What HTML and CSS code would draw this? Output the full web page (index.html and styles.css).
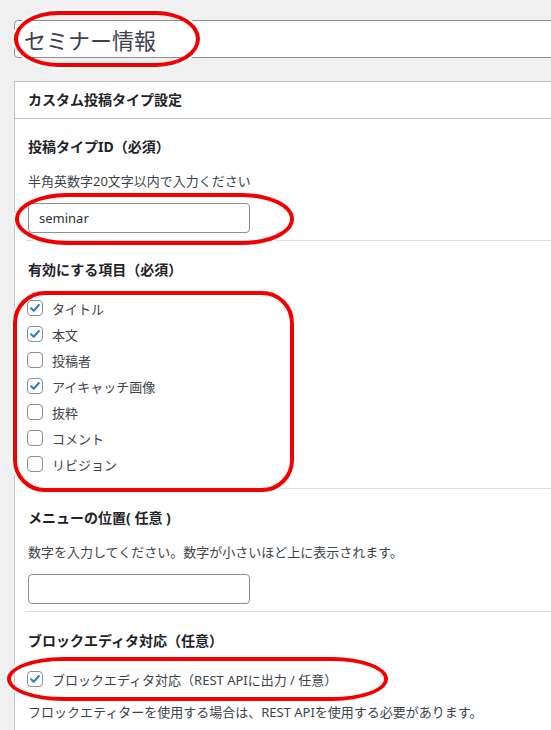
FILE: index.html
```html
<!DOCTYPE html>
<html lang="ja">
<head>
<meta charset="utf-8">
<title>セミナー情報 - カスタム投稿タイプ設定</title>
<link rel="stylesheet" href="styles.css">
</head>
<body>

<div class="wrap">

<div class="titlewrap">
  <input class="title-input" type="text" value="セミナー情報">
</div>

<div class="postbox">
  <h2 class="postbox-title">カスタム投稿タイプ設定</h2>
  <div class="inside">

    <div class="field first">
      <h3>投稿タイプID（必須）</h3>
      <p class="desc">半角英数字20文字以内で入力ください</p>
      <input class="text" type="text" value="seminar">
    </div>

    <div class="field">
      <h3>有効にする項目（必須）</h3>
      <ul class="checks">
        <li><span class="cb on"><svg viewBox="0 0 16 16"><path d="M3.6 8.2 L6.6 11.2 L12.4 4.6"/></svg></span>タイトル</li>
        <li><span class="cb on"><svg viewBox="0 0 16 16"><path d="M3.6 8.2 L6.6 11.2 L12.4 4.6"/></svg></span>本文</li>
        <li><span class="cb"></span>投稿者</li>
        <li><span class="cb on"><svg viewBox="0 0 16 16"><path d="M3.6 8.2 L6.6 11.2 L12.4 4.6"/></svg></span>アイキャッチ画像</li>
        <li><span class="cb"></span>抜粋</li>
        <li><span class="cb"></span>コメント</li>
        <li><span class="cb"></span>リビジョン</li>
      </ul>
    </div>

    <div class="field">
      <h3>メニューの位置( 任意 )</h3>
      <p class="desc">数字を入力してください。数字が小さいほど上に表示されます。</p>
      <input class="text" type="text" value="">
    </div>

    <div class="field last">
      <h3>ブロックエディタ対応（任意）</h3>
      <ul class="checks">
        <li><span class="cb on"><svg viewBox="0 0 16 16"><path d="M3.6 8.2 L6.6 11.2 L12.4 4.6"/></svg></span>ブロックエディタ対応（REST APIに出力 / 任意）</li>
      </ul>
      <p class="note">フロックエティターを使用する場合は、REST APIを使用する必要があります。</p>
    </div>

  </div>
</div>

</div>

<!-- red annotation marks drawn over the screen -->
<span class="mark mark-title"></span>
<span class="mark mark-id"></span>
<span class="mark mark-items"></span>
<span class="mark mark-block"></span>

</body>
</html>
```

FILE: styles.css
```css
html, body {
	margin: 0;
	overflow: hidden;
	background: #f0f0f1;
}
body {
	position: relative;
	font-family: "Noto Sans", "Noto Sans CJK JP", sans-serif;
	font-size: 13px;
	color: #3c434a;
}
.wrap {
	width: 580px;
	padding: 20px 0 0 14px;
}

.title-input {
	display: block;
	box-sizing: border-box;
	width: 100%;
	height: 38px;
	margin: 0;
	padding: 0 9px;
	border: 1px solid #8c8f94;
	border-radius: 4px;
	background: #fff;
	font-family: "Noto Sans", "Noto Sans CJK JP", sans-serif;
	font-size: 22px;
	line-height: 36px;
	color: #3c434a;
}

.postbox {
	margin-top: 23px;
	background: #fff;
	border: 1px solid #c3c4c7;
	border-bottom: 0;
}
.postbox-title {
	margin: 0;
	height: 36px;
	line-height: 36px;
	padding: 0 13px;
	font-size: 14px;
	font-weight: 700;
	color: #1d2327;
	border-bottom: 1px solid #c3c4c7;
}
.inside { padding-left: 11px; }

.field {
	padding: 19px 0 7px 2px;
	border-bottom: 1px solid #dcdcde;
}
.field.first { padding-top: 18px; }
.field.last { border-bottom: 0; padding-bottom: 20px; }
.field h3 {
	margin: 0;
	font-size: 14px;
	line-height: 20px;
	font-weight: 700;
	color: #1d2327;
}
.desc {
	margin: 14px 0 12px;
	line-height: 20px;
}
.note {
	margin: 10px 0 0;
	line-height: 20px;
}

.text {
	display: block;
	box-sizing: border-box;
	width: 222px;
	height: 30px;
	margin: 0;
	padding: 0 10px;
	border: 1px solid #8c8f94;
	border-radius: 4px;
	background: #fff;
	font-family: "Noto Sans", "Noto Sans CJK JP", sans-serif;
	font-size: 13px;
	color: #2c3338;
}

.checks {
	list-style: none;
	margin: 15px 0 4px;
	padding: 0;
}
.checks li {
	display: flex;
	align-items: center;
	gap: 9px;
	height: 26px;
	margin-left: -1px;
}
.cb {
	box-sizing: border-box;
	width: 16px;
	height: 16px;
	border: 1px solid #8c8f94;
	border-radius: 4px;
	background: #fff;
	flex: none;
}
.cb svg {
	display: block;
	width: 14px;
	height: 14px;
	fill: none;
	stroke: #2f7fc4;
	stroke-width: 2.4;
	stroke-linecap: round;
	stroke-linejoin: round;
}

.mark {
	position: absolute;
	box-sizing: border-box;
	border: 4px solid #f40000;
	box-shadow: 0 0 0 2px #fff;
	pointer-events: none;
}
.mark-title { left: 14px; top: 11px; width: 186px; height: 56px; border-radius: 44px / 28px; }
.mark-id { left: 15px; top: 193px; width: 279px; height: 52px; border-radius: 52px / 26px; }
.mark-items { left: 13px; top: 291px; width: 281px; height: 201px; border-radius: 32px; }
.mark-block { left: 7px; top: 657px; width: 381px; height: 44px; border-radius: 56px / 22px; }
```
